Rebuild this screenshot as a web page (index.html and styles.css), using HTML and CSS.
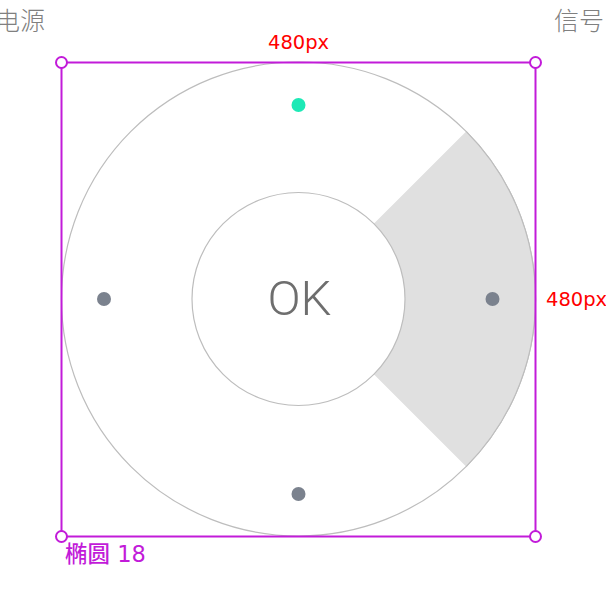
FILE: index.html
```html
<!DOCTYPE html>
<html>
<head>
<meta charset="utf-8">
<link rel="stylesheet" href="styles.css">
</head>
<body>
<div class="canvas">
  <span class="label label-left">电源</span>
  <span class="label label-right">信号</span>
  <svg class="pad" width="606" height="604" viewBox="0 0 606 604">
    <circle cx="298.5" cy="299" r="237" fill="#fff" stroke="#bdbdbd" stroke-width="1.2"/>
    <path d="M298.5 299 L466.1 131.4 A237 237 0 0 1 466.1 466.6 Z" fill="#e0e0e0" stroke="none"/>
    <path d="M466.1 131.4 A237 237 0 0 1 466.1 466.6" fill="none" stroke="#bdbdbd" stroke-width="1.2"/>
    <circle cx="298.5" cy="299" r="106.5" fill="#fff" stroke="#bdbdbd" stroke-width="1.2"/>
    <circle cx="298.5" cy="105" r="7" fill="#1de9b6"/>
    <circle cx="104" cy="299" r="7" fill="#7b828e"/>
    <circle cx="492.5" cy="299" r="7" fill="#7b828e"/>
    <circle cx="298.5" cy="494" r="7" fill="#7b828e"/>
    <rect x="61.5" y="62.5" width="474" height="474" fill="none" stroke="#c21bd9" stroke-width="2"/>
    <circle cx="61.5" cy="62.5" r="5.5" fill="#fff" stroke="#c21bd9" stroke-width="2"/>
    <circle cx="535.5" cy="62.5" r="5.5" fill="#fff" stroke="#c21bd9" stroke-width="2"/>
    <circle cx="61.5" cy="536.5" r="5.5" fill="#fff" stroke="#c21bd9" stroke-width="2"/>
    <circle cx="535.5" cy="536.5" r="5.5" fill="#fff" stroke="#c21bd9" stroke-width="2"/>
  </svg>
  <span class="ok">OK</span>
  <span class="dim dim-top">480px</span>
  <span class="dim dim-right">480px</span>
  <span class="name">椭圆 18</span>
</div>
</body>
</html>
```
FILE: styles.css
```css
html, body {
  margin: 0;
  padding: 0;
  background: #fff;
}
.canvas {
  position: relative;
  width: 606px;
  height: 604px;
  overflow: hidden;
  font-family: "Liberation Sans", "Noto Sans CJK SC", sans-serif;
}
.pad {
  position: absolute;
  left: 0;
  top: 0;
}
.label {
  position: absolute;
  top: 2px;
  font-family: "Noto Sans CJK SC", sans-serif;
  font-size: 25px;
  line-height: 34px;
  color: #808080;
  font-weight: 300;
}
.label-left { left: -5px; }
.label-right { left: 554px; }
.ok {
  position: absolute;
  left: 0;
  width: 599px;
  top: 272px;
  text-align: center;
  font-family: Roboto, "Liberation Sans", sans-serif;
  font-weight: 300;
  font-size: 49px;
  line-height: 54px;
  color: #6e6e6e;
  z-index: 1;
}
.dim {
  position: absolute;
  color: #ff0000;
  font-size: 19.5px;
  line-height: 22px;
  font-family: "DejaVu Sans", sans-serif;
}
.dim-top {
  left: 268px;
  top: 32px;
}
.dim-right {
  left: 546px;
  top: 289px;
}
.name {
  position: absolute;
  left: 65px;
  top: 539px;
  font-family: "DejaVu Sans", "Noto Sans CJK SC", sans-serif;
  font-size: 22.5px;
  line-height: 30px;
  font-weight: 500;
  color: #c21bd9;
}
```
